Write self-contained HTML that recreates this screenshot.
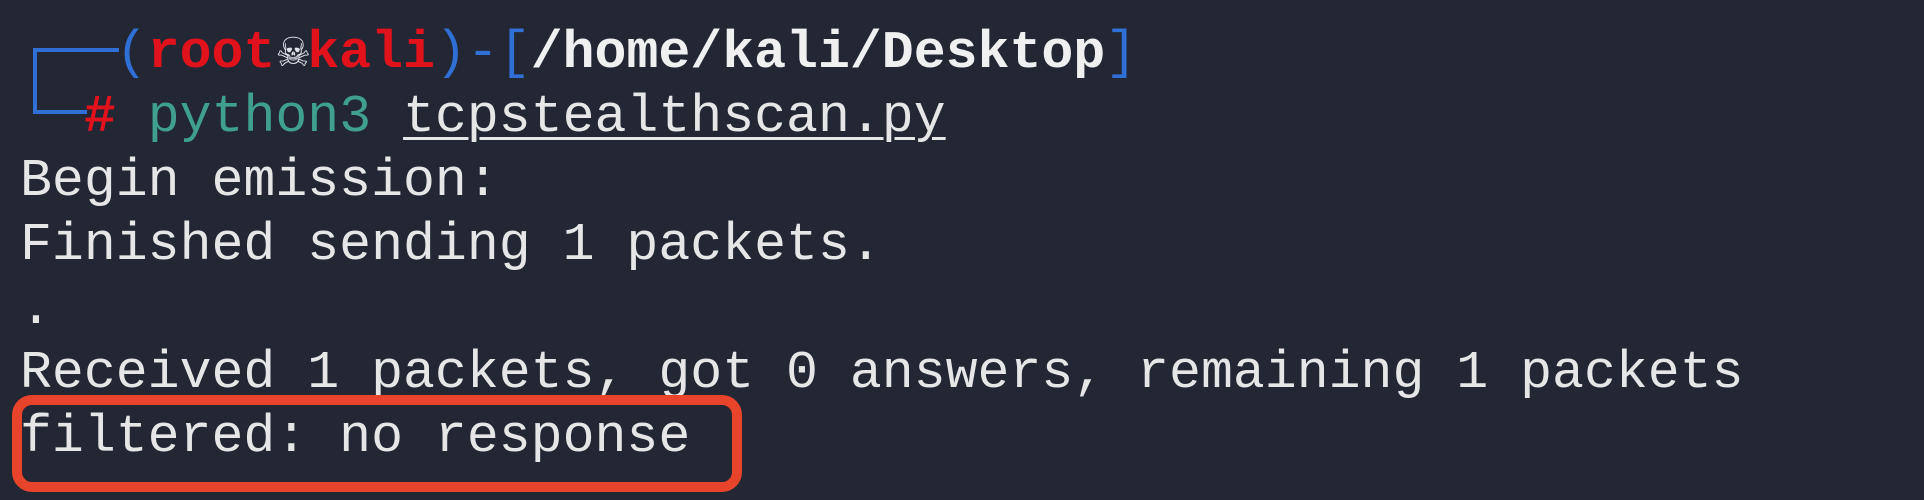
<!DOCTYPE html>
<html><head><meta charset="utf-8"><style>
html,body{margin:0;padding:0;}
body{width:1924px;height:500px;background:#222733;position:relative;overflow:hidden;
font-family:"Liberation Mono",monospace;font-size:53.2px;color:#e6e6e6;}
.l{position:absolute;left:20px;white-space:pre;line-height:64px;height:64px;}
.b{color:#2f6fd6}.r{color:#e2121c;font-weight:bold}.w{color:#f0f0f0;font-weight:bold}
.t{color:#3fa08f}.u{text-decoration:underline;text-decoration-thickness:3px;text-underline-offset:6px}
.bx{position:absolute;background:#2f6fd6}
.sk{display:inline-block;width:31.9px;text-align:center;color:#dfe3e8;font-family:"DejaVu Sans",sans-serif;font-size:40px;vertical-align:top}
.box{position:absolute;left:12px;top:395px;width:710px;height:77px;border:10px solid #e8442b;border-radius:20px;}
</style></head><body>
<div class="bx" style="left:33px;top:48px;width:86px;height:4px"></div>
<div class="bx" style="left:33px;top:48px;width:4px;height:66px"></div>
<div class="bx" style="left:33px;top:110px;width:54px;height:4px"></div>
<div class="l" style="top:21px">   <span class="b">(</span><span class="r">root</span><span class="sk">☠</span><span class="r">kali</span><span class="b">)-[</span><span class="w">/home/kali/Desktop</span><span class="b">]</span></div>
<div class="l" style="top:85px">  <span class="r">#</span> <span class="t">python3</span> <span class="u">tcpstealthscan.py</span></div>
<div class="l" style="top:149px">Begin emission:</div>
<div class="l" style="top:213px">Finished sending 1 packets.</div>
<div class="l" style="top:277px">.</div>
<div class="l" style="top:341px">Received 1 packets, got 0 answers, remaining 1 packets</div>
<div class="l" style="top:405px">filtered: no response</div>
<div class="box"></div>
</body></html>
